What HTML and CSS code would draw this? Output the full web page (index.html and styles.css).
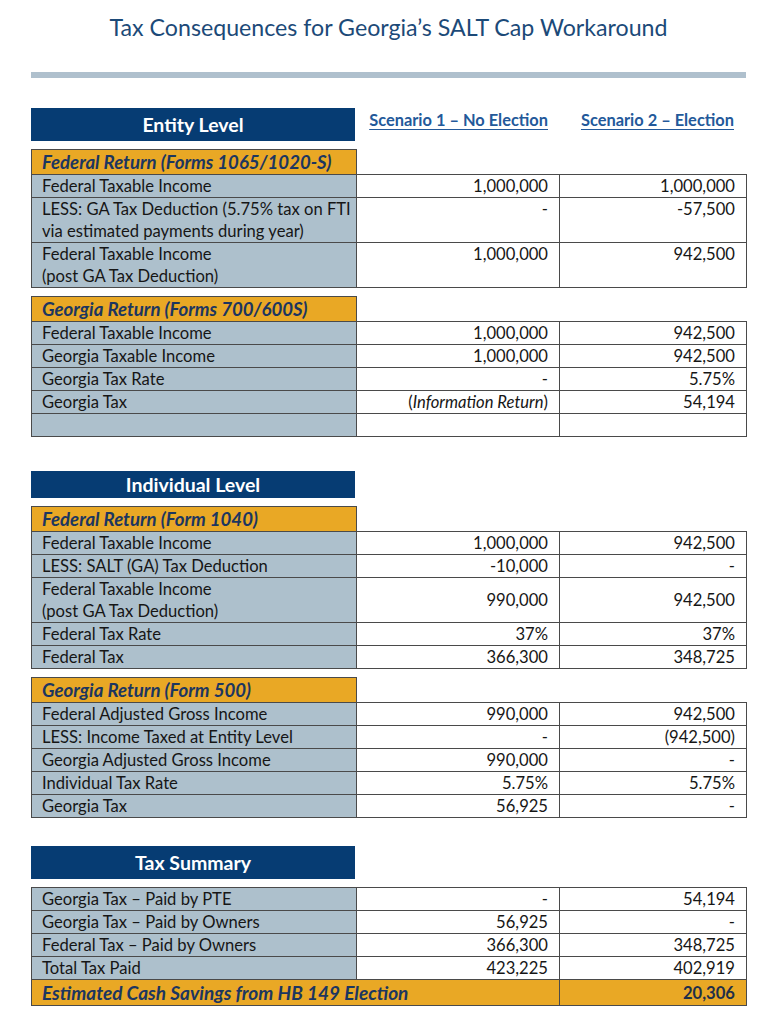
FILE: index.html
```html
<!DOCTYPE html>
<html lang="en">
<head>
<meta charset="utf-8">
<title>Tax Consequences for Georgia’s SALT Cap Workaround</title>
<link rel="stylesheet" href="styles.css">
</head>
<body>
<div class="page">
  <h1 class="title">Tax Consequences for Georgia’s SALT Cap Workaround</h1>
  <div class="rule"></div>

  <section class="block entity">
    <div class="head-row">
      <div class="level">Entity Level</div>
      <div class="scen scen1">Scenario 1 – No Election</div>
      <div class="scen scen2">Scenario 2 – Election</div>
    </div>
    <table class="sheet valign-top">
      <colgroup><col class="c1"><col class="c2"><col class="c3"></colgroup>
      <tr class="form"><th>Federal Return (Forms 1065/1020-S)</th><td></td><td></td></tr>
      <tr><th>Federal Taxable Income</th><td>1,000,000</td><td>1,000,000</td></tr>
      <tr class="tall"><th>LESS: GA Tax Deduction (5.75% tax on FTI<br>via estimated payments during year)</th><td>-</td><td>-57,500</td></tr>
      <tr class="tall"><th>Federal Taxable Income<br>(post GA Tax Deduction)</th><td>1,000,000</td><td>942,500</td></tr>
    </table>
    <table class="sheet">
      <colgroup><col class="c1"><col class="c2"><col class="c3"></colgroup>
      <tr class="form"><th>Georgia Return (Forms 700/600S)</th><td></td><td></td></tr>
      <tr><th>Federal Taxable Income</th><td>1,000,000</td><td>942,500</td></tr>
      <tr><th>Georgia Taxable Income</th><td>1,000,000</td><td>942,500</td></tr>
      <tr><th>Georgia Tax Rate</th><td>-</td><td>5.75%</td></tr>
      <tr><th>Georgia Tax</th><td>(<i>Information Return</i>)</td><td>54,194</td></tr>
      <tr><th></th><td></td><td></td></tr>
    </table>
  </section>

  <section class="block individual">
    <div class="head-row">
      <div class="level level-slim">Individual Level</div>
    </div>
    <table class="sheet">
      <colgroup><col class="c1"><col class="c2"><col class="c3"></colgroup>
      <tr class="form"><th>Federal Return (Form 1040)</th><td></td><td></td></tr>
      <tr><th>Federal Taxable Income</th><td>1,000,000</td><td>942,500</td></tr>
      <tr><th>LESS: SALT (GA) Tax Deduction</th><td>-10,000</td><td>-</td></tr>
      <tr class="tall"><th>Federal Taxable Income<br>(post GA Tax Deduction)</th><td>990,000</td><td>942,500</td></tr>
      <tr><th>Federal Tax Rate</th><td>37%</td><td>37%</td></tr>
      <tr><th>Federal Tax</th><td>366,300</td><td>348,725</td></tr>
    </table>
    <table class="sheet">
      <colgroup><col class="c1"><col class="c2"><col class="c3"></colgroup>
      <tr class="form"><th>Georgia Return (Form 500)</th><td></td><td></td></tr>
      <tr><th>Federal Adjusted Gross Income</th><td>990,000</td><td>942,500</td></tr>
      <tr><th>LESS: Income Taxed at Entity Level</th><td>-</td><td>(942,500)</td></tr>
      <tr><th>Georgia Adjusted Gross Income</th><td>990,000</td><td>-</td></tr>
      <tr><th>Individual Tax Rate</th><td>5.75%</td><td>5.75%</td></tr>
      <tr><th>Georgia Tax</th><td>56,925</td><td>-</td></tr>
    </table>
  </section>

  <section class="block summary">
    <div class="head-row">
      <div class="level">Tax Summary</div>
    </div>
    <table class="sheet">
      <colgroup><col class="c1"><col class="c2"><col class="c3"></colgroup>
      <tr><th>Georgia Tax – Paid by PTE</th><td>-</td><td>54,194</td></tr>
      <tr><th>Georgia Tax – Paid by Owners</th><td>56,925</td><td>-</td></tr>
      <tr><th>Federal Tax – Paid by Owners</th><td>366,300</td><td>348,725</td></tr>
      <tr><th>Total Tax Paid</th><td>423,225</td><td>402,919</td></tr>
      <tr class="savings"><th colspan="2">Estimated Cash Savings from HB 149 Election</th><td>20,306</td></tr>
    </table>
  </section>
</div>
</body>
</html>
```

FILE: styles.css
```css
* { box-sizing: border-box; }

html, body {
  margin: 0;
  padding: 0;
  background: #ffffff;
}

body {
  font-family: Lato, "Open Sans", "Liberation Sans", sans-serif;
  color: #161616;
}

.page {
  width: 772px;
  padding: 0 26px 0 31px;
}

.title {
  margin: 0;
  padding-top: 13px;
  font-size: 23.2px;
  line-height: 28px;
  font-weight: 400;
  color: #1c4a78;
  text-align: center;
}

.rule {
  margin-top: 31px;
  height: 6px;
  background: #afc0cd;
}

.block.entity { margin-top: 30px; }
.block.individual { margin-top: 34px; }
.block.summary { margin-top: 28px; }

.head-row {
  display: flex;
  align-items: center;
  margin-bottom: 8px;
}

.level {
  width: 324px;
  height: 33px;
  background: #063c73;
  color: #ffffff;
  font-weight: 700;
  font-size: 19.5px;
  line-height: 33px;
  text-align: center;
}

.level-slim {
  height: 27px;
  line-height: 27px;
}

.scen {
  color: #23599a;
  font-weight: 700;
  font-size: 16.4px;
  text-decoration: underline;
  text-decoration-thickness: 1px;
  text-underline-offset: 3px;
  text-align: right;
  align-self: flex-start;
  padding-top: 2px;
  white-space: nowrap;
}

.scen1 { width: 193px; }
.scen2 { width: 186px; }

.sheet {
  border-collapse: collapse;
  table-layout: fixed;
  width: 715px;
  margin-bottom: 8px;
}

.sheet .c1 { width: 325px; }
.sheet .c2 { width: 203px; }
.sheet .c3 { width: 187px; }

.sheet th,
.sheet td {
  border: 1px solid #4a4a4a;
  height: 23px;
  padding: 0 10px;
  font-size: 16.6px;
  line-height: 22px;
  vertical-align: middle;
  white-space: nowrap;
}

.sheet th {
  background: #adc0cc;
  font-weight: 400;
  text-align: left;
  color: #161616;
}

.sheet td {
  text-align: right;
  padding-right: 11px;
}

.sheet tr.tall th,
.sheet tr.tall td {
  height: 45px;
}

.valign-top tr.tall td {
  vertical-align: top;
}

.sheet tr.form th {
  background: #e9a825;
  color: #1c3660;
  font-weight: 700;
  font-style: italic;
  font-size: 18.6px;
  height: 25px;
}

.sheet tr.form td {
  border: none;
}

.sheet tr.savings th,
.sheet tr.savings td {
  background: #e9a825;
  color: #1c3660;
  font-weight: 700;
  height: 26px;
}

.sheet tr.savings th {
  font-style: italic;
  font-size: 19px;
}

.sheet tr.savings td {
  color: #1f2f4a;
}
```
